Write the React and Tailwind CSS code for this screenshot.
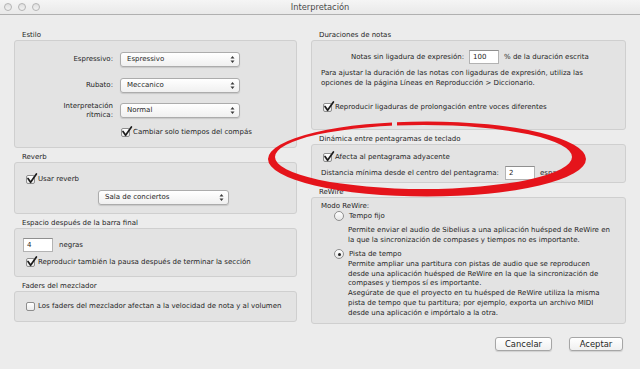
import React from 'react';

const Check = ({ checked = true }) => (
  <span className="relative inline-block w-[9px] h-[9px] shrink-0 rounded-[2px] border border-[#8e8e8e] bg-gradient-to-b from-white to-[#ebebeb]">
    {checked && (
      <svg className="absolute left-[-1px] top-[-4px]" width="12" height="13" viewBox="0 0 12 13">
        <path d="M2 6.5 L4.6 10.3 L10.4 2" fill="none" stroke="#1c1c1c" strokeWidth="1.7" strokeLinecap="round" strokeLinejoin="round" />
      </svg>
    )}
  </span>
);

const Radio = ({ on }) => (
  <span className="flex w-[10px] h-[10px] shrink-0 items-center justify-center rounded-full border border-[#8e8e8e] bg-gradient-to-b from-white to-[#e6e6e6]">
    {on && <span className="w-[3px] h-[3px] rounded-full bg-[#222]" />}
  </span>
);

const Popup = ({ value, className }) => (
  <div className={`flex h-[15px] items-center justify-between rounded-[3px] border border-[#acacac] bg-gradient-to-b from-white to-[#f0f0f0] pl-[6px] pr-[4px] shadow-[0_1px_1px_rgba(0,0,0,0.12)] ${className}`}>
    <span>{value}</span>
    <svg width="5" height="9" viewBox="0 0 5 9">
      <path d="M0.5 3.6L2.5 0.9L4.5 3.6Z M0.5 5.4L2.5 8.1L4.5 5.4Z" fill="#3a3a3a" />
    </svg>
  </div>
);

const Field = ({ value, className }) => (
  <div className={`flex h-[14px] items-center border border-[#b3b3b3] border-t-[#8f8f8f] bg-white pl-[3px] ${className}`}>{value}</div>
);

const Group = ({ title, h, children, className = '' }) => (
  <div className={className}>
    <div className="h-[9px] pl-[8px] leading-[9px]">{title}</div>
    <div className={`rounded-[3px] border border-[#cfcfcf] bg-[#e3e3e3] ${h}`}>{children}</div>
  </div>
);

export default function App() {
  return (
    <div className="relative h-[369px] w-[640px] overflow-hidden bg-[#ececec] text-[7px] text-[#1e1e1e]" style={{ fontFamily: '"DejaVu Sans", sans-serif' }}>
      {/* title bar */}
      <div className="relative flex h-[15px] items-center border-b border-[#b0b0b0] bg-gradient-to-b from-[#f5f5f5] to-[#e9e9e9]">
        <div className="flex gap-[6px] pl-[4px]">
          <span className="h-[8px] w-[8px] rounded-full border border-[#b4b4b4] bg-gradient-to-b from-[#e0e0e0] to-[#f2f2f2]" />
          <span className="h-[8px] w-[8px] rounded-full border border-[#b4b4b4] bg-gradient-to-b from-[#e0e0e0] to-[#f2f2f2]" />
          <span className="h-[8px] w-[8px] rounded-full border border-[#b4b4b4] bg-gradient-to-b from-[#e0e0e0] to-[#f2f2f2]" />
        </div>
        <div className="absolute inset-0 flex items-center justify-center text-[8.3px] text-[#4a4a4a]">Interpretación</div>
      </div>

      <div className="flex gap-[14px] px-[14px] pt-[16px]">
        {/* left column */}
        <div className="flex w-[283px] flex-col gap-[5px]">
          <Group title="Estilo" h="h-[108px]">
            <div className="flex flex-col pt-[11px]">
              <div className="flex h-[15px] items-center">
                <span className="w-[98px] text-right">Espressivo:</span>
                <Popup value="Espressivo" className="ml-[7px] w-[120px]" />
              </div>
              <div className="mt-[11px] flex h-[15px] items-center">
                <span className="w-[98px] text-right">Rubato:</span>
                <Popup value="Meccanico" className="ml-[7px] w-[120px]" />
              </div>
              <div className="mt-[10px] flex h-[15px] items-center">
                <span className="w-[98px] text-right leading-[8.5px]">Interpretación<br />rítmica:</span>
                <Popup value="Normal" className="ml-[7px] w-[120px]" />
              </div>
              <div className="mt-[8px] ml-[106px] flex h-[12px] items-center gap-[3px]">
                <Check />
                <span>Cambiar solo tiempos del compás</span>
              </div>
            </div>
          </Group>

          <Group title="Reverb" h="h-[52px]">
            <div className="flex flex-col pt-[10px]">
              <div className="ml-[11px] flex h-[12px] items-center gap-[3px]">
                <Check />
                <span>Usar reverb</span>
              </div>
              <Popup value="Sala de conciertos" className="mt-[5px] ml-[83px] w-[131px]" />
            </div>
          </Group>

          <Group title="Espacio después de la barra final" h="h-[49px]">
            <div className="flex flex-col pt-[9px]">
              <div className="ml-[8px] flex items-center gap-[6px]">
                <Field value="4" className="w-[30px]" />
                <span>negras</span>
              </div>
              <div className="mt-[4px] ml-[11px] flex h-[12px] items-center gap-[3px]">
                <Check />
                <span>Reproducir también la pausa después de terminar la sección</span>
              </div>
            </div>
          </Group>

          <Group title="Faders del mezclador" h="h-[31px]">
            <div className="ml-[11px] mt-[8px] flex h-[12px] items-center gap-[3px]">
              <Check checked={false} />
              <span>Los faders del mezclador afectan a la velocidad de nota y al volumen</span>
            </div>
          </Group>
        </div>

        {/* right column */}
        <div className="flex w-[315px] flex-col gap-[5px]">
          <Group title="Duraciones de notas" h="h-[90px]">
            <div className="flex flex-col pt-[9px]">
              <div className="flex items-center">
                <span className="w-[152px] text-right">Notas sin ligadura de expresión:</span>
                <Field value="100" className="ml-[5px] w-[30px]" />
                <span className="ml-[5px]">% de la duración escrita</span>
              </div>
              <p className="mt-[4px] pl-[9px] leading-[10px]">
                Para ajustar la duración de las notas con ligaduras de expresión, utiliza las<br />
                opciones de la página Líneas en Reproducción &gt; Diccionario.
              </p>
              <div className="mt-[13px] ml-[11px] flex h-[12px] items-center gap-[3px]">
                <Check />
                <span>Reproducir ligaduras de prolongación entre voces diferentes</span>
              </div>
            </div>
          </Group>

          <Group title="Dinámica entre pentagramas de teclado" h="h-[39px]">
            <div className="flex flex-col pt-[6px]">
              <div className="ml-[11px] flex h-[12px] items-center gap-[3px]">
                <Check />
                <span>Afecta al pentagrama adyacente</span>
              </div>
              <div className="mt-[3px] flex items-center pl-[9px]">
                <span className="w-[184px]">Distancia mínima desde el centro del pentagrama:</span>
                <Field value="2" className="w-[30px]" />
                <span className="ml-[5px]">espacios</span>
              </div>
            </div>
          </Group>

          <Group title="ReWire" h="h-[127px]">
            <div className="flex flex-col pt-[3px]">
              <div className="h-[10px] pl-[9px] leading-[10px]">Modo ReWire:</div>
              <div className="ml-[22px] flex h-[10px] items-center gap-[5px]">
                <Radio />
                <span>Tempo fijo</span>
              </div>
              <p className="mt-[4px] pl-[36px] leading-[10px]">
                Permite enviar el audio de Sibelius a una aplicación huésped de ReWire en<br />
                la que la sincronización de compases y tiempos no es importante.
              </p>
              <div className="mt-[4px] ml-[22px] flex h-[10px] items-center gap-[5px]">
                <Radio on />
                <span>Pista de tempo</span>
              </div>
              <p className="mt-[1px] pl-[36px] leading-[9.7px]">
                Permite ampliar una partitura con pistas de audio que se reproducen<br />
                desde una aplicación huésped de ReWire en la que la sincronización de<br />
                compases y tiempos sí es importante.<br />
                Asegúrate de que el proyecto en tu huésped de ReWire utiliza la misma<br />
                pista de tempo que tu partitura; por ejemplo, exporta un archivo MIDI<br />
                desde una aplicación e impórtalo a la otra.
              </p>
            </div>
          </Group>

          <div className="mt-[8px] flex justify-end gap-[17px] pr-[3px] text-[8.4px]">
            <button className="h-[14px] w-[57px] rounded-[3px] border border-[#a6a6a6] bg-gradient-to-b from-white to-[#f0f0f0] leading-none shadow-[0_1px_1px_rgba(0,0,0,0.12)]">Cancelar</button>
            <button className="h-[14px] w-[54px] rounded-[3px] border border-[#a6a6a6] bg-gradient-to-b from-white to-[#f0f0f0] leading-none shadow-[0_1px_1px_rgba(0,0,0,0.12)]">Aceptar</button>
          </div>
        </div>
      </div>

      {/* red annotation ellipse */}
      <svg className="pointer-events-none absolute left-0 top-0" width="640" height="369" viewBox="0 0 640 369">
        <defs>
          <mask id="gap">
            <rect x="0" y="0" width="640" height="369" fill="white" />
            <rect x="392" y="112" width="5" height="18" fill="black" />
          </mask>
        </defs>
        <path
          mask="url(#gap)"
          fillRule="evenodd"
          fill="#e5141b"
          d="M268 159 A159 37.5 0 1 0 586 159 A159 37.5 0 1 0 268 159 Z M275 157 A148.5 32 0 1 0 572 157 A148.5 32 0 1 0 275 157 Z"
        />
      </svg>
    </div>
  );
}
